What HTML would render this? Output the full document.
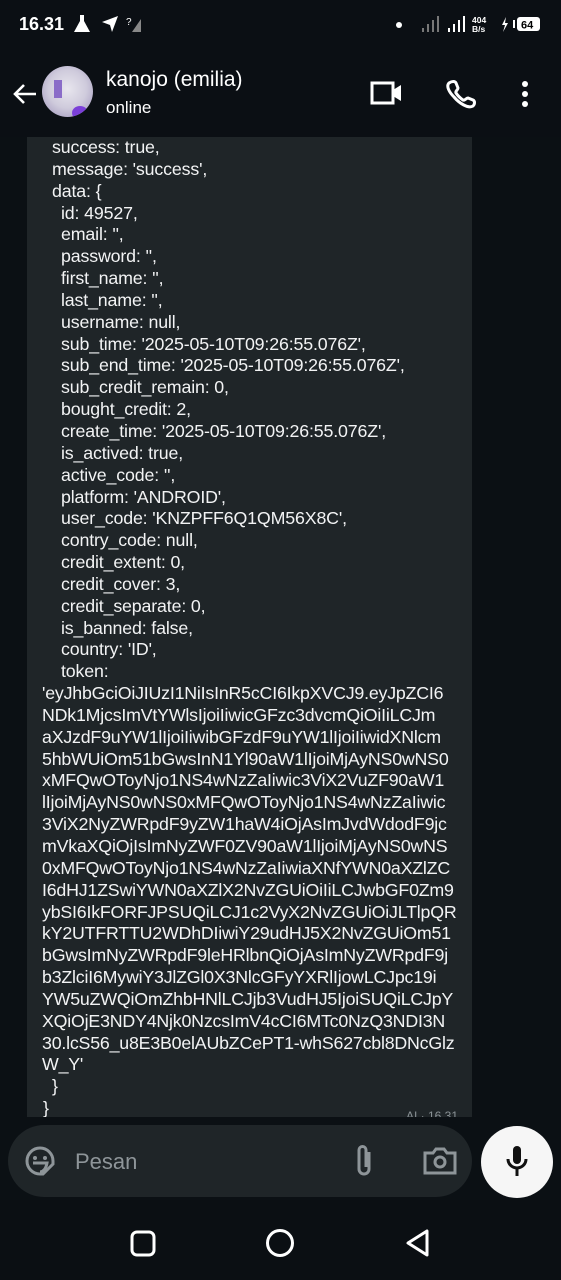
<!DOCTYPE html>
<html><head><meta charset="utf-8"><style>
*{margin:0;padding:0;box-sizing:border-box}
body{width:561px;height:1280px;overflow:hidden;background:#0b1014;font-family:"Liberation Sans",sans-serif;position:relative}
.status{position:absolute;top:0;left:0;width:561px;height:52px;background:#0b0f14;color:#fff}
.header{position:absolute;top:52px;left:0;width:561px;height:85px;background:#0b0f14;color:#fff}
.bubble{position:absolute;left:27px;top:137px;width:445px;height:980px;background:#1f2528;overflow:hidden}
.txt{position:absolute;left:0;top:0;color:#f2f3f4;font-size:17.8px;line-height:21.85px;white-space:pre;letter-spacing:-0.15px}
.tok{letter-spacing:-0.2px}
.input{position:absolute;left:8px;top:1125px;width:464px;height:72px;border-radius:36px;background:#1f2528}
.mic{position:absolute;left:481px;top:1126px;width:72px;height:72px;border-radius:50%;background:#f6f6f6}
.nav{position:absolute;left:0;top:1200px;width:561px;height:80px;background:#0b0f13}
</style></head><body>
<div class="status">
 <div style="position:absolute;left:19px;top:14px;font-size:18px;font-weight:bold">16.31</div>
 <svg style="position:absolute;left:72px;top:13px" width="70" height="22" viewBox="0 0 70 22">
  <path d="M6 2h6M8 2v6l-6 11h16l-6-11V2" fill="#fff"/>
  <path d="M30 9l16-6-6 16-2-7z" fill="#fff"/>
  <text x="54" y="12" fill="#fff" font-size="10" font-family="Liberation Sans">?</text>
  <path d="M60 19h9V6z" fill="#888"/>
 </svg>
 <div style="position:absolute;left:396px;top:22px;width:6px;height:6px;border-radius:50%;background:#fff"></div>
 <svg style="position:absolute;left:420px;top:14px" width="125" height="22" viewBox="0 0 125 22">
  <rect x="2" y="14" width="2" height="4" fill="#777"/><rect x="7" y="10" width="2" height="8" fill="#777"/><rect x="12" y="6" width="2" height="12" fill="#777"/><rect x="17" y="2" width="2" height="16" fill="#777"/>
  <rect x="28" y="14" width="2" height="4" fill="#fff"/><rect x="33" y="10" width="2" height="8" fill="#fff"/><rect x="38" y="6" width="2" height="12" fill="#fff"/><rect x="43" y="2" width="2" height="16" fill="#fff"/>
  <text x="52" y="9" fill="#fff" font-size="8.5" font-family="Liberation Sans" font-weight="bold">404</text>
  <text x="52" y="18" fill="#fff" font-size="8.5" font-family="Liberation Sans" font-weight="bold">B/s</text>
  <path d="M86 3l-4 8h3l-2 7 5-9h-3z" fill="#fff"/>
  <rect x="93" y="6" width="2" height="8" fill="#fff"/>
  <rect x="97" y="3" width="23" height="14" rx="3" fill="#fff"/>
  <text x="101" y="14.5" fill="#000" font-size="11" font-family="Liberation Sans" font-weight="bold">64</text>
 </svg>
</div>
<div class="header">
 <svg style="position:absolute;left:12px;top:30px" width="26" height="24" viewBox="0 0 26 24"><path d="M24 12H3M12 3l-9 9 9 9" stroke="#fff" stroke-width="2.6" fill="none"/></svg>
 <div style="position:absolute;left:42px;top:14px;width:51px;height:51px;border-radius:50%;background:radial-gradient(circle at 50% 45%,#e8e6ee 0,#cfcbdc 50%,#9a8fb8 100%);overflow:hidden">
  <div style="position:absolute;left:12px;top:14px;width:8px;height:18px;background:#8a6cc8"></div>
  <div style="position:absolute;left:30px;top:40px;width:16px;height:14px;background:#7b3fd8;border-radius:50%"></div>
 </div>
 <div style="position:absolute;left:106px;top:16px;font-size:21px">kanojo (emilia)</div>
 <div style="position:absolute;left:106px;top:46px;font-size:17px">online</div>
 <svg style="position:absolute;left:370px;top:29px" width="34" height="24" viewBox="0 0 34 24"><rect x="2" y="2" width="21" height="20" stroke="#fff" stroke-width="3" fill="none"/><path d="M23 9l8-5v16l-8-5z" fill="#fff"/></svg>
 <svg style="position:absolute;left:445px;top:27px" width="32" height="30" viewBox="0 0 32 30"><path d="M4 4c3-2 6-2 7 0l2 5c0 2-3 3-2 5 2 3 4 5 7 7 2 1 3-2 5-2l5 2c2 1 2 4 0 6-5 3-14-3-19-9C4 13 1 7 4 4z" stroke="#fff" stroke-width="3" fill="none"/></svg>
 <svg style="position:absolute;left:520px;top:28px" width="10" height="28" viewBox="0 0 10 28"><circle cx="5" cy="4" r="3" fill="#fff"/><circle cx="5" cy="14" r="3" fill="#fff"/><circle cx="5" cy="24" r="3" fill="#fff"/></svg>
</div>
<div class="bubble">
<div class="txt"><span style="padding-left:25px">success: true,</span>
<span style="padding-left:25px">message: 'success',</span>
<span style="padding-left:25px">data: {</span>
<span style="padding-left:34px">id: 49527,</span>
<span style="padding-left:34px">email: '',</span>
<span style="padding-left:34px">password: '',</span>
<span style="padding-left:34px">first_name: '',</span>
<span style="padding-left:34px">last_name: '',</span>
<span style="padding-left:34px">username: null,</span>
<span style="padding-left:34px">sub_time: '2025-05-10T09:26:55.076Z',</span>
<span style="padding-left:34px">sub_end_time: '2025-05-10T09:26:55.076Z',</span>
<span style="padding-left:34px">sub_credit_remain: 0,</span>
<span style="padding-left:34px">bought_credit: 2,</span>
<span style="padding-left:34px">create_time: '2025-05-10T09:26:55.076Z',</span>
<span style="padding-left:34px">is_actived: true,</span>
<span style="padding-left:34px">active_code: '',</span>
<span style="padding-left:34px">platform: 'ANDROID',</span>
<span style="padding-left:34px">user_code: 'KNZPFF6Q1QM56X8C',</span>
<span style="padding-left:34px">contry_code: null,</span>
<span style="padding-left:34px">credit_extent: 0,</span>
<span style="padding-left:34px">credit_cover: 3,</span>
<span style="padding-left:34px">credit_separate: 0,</span>
<span style="padding-left:34px">is_banned: false,</span>
<span style="padding-left:34px">country: 'ID',</span>
<span style="padding-left:34px">token:</span>
<span class="tok" style="padding-left:15px">'eyJhbGciOiJIUzI1NiIsInR5cCI6IkpXVCJ9.eyJpZCI6</span>
<span class="tok" style="padding-left:15px">NDk1MjcsImVtYWlsIjoiIiwicGFzc3dvcmQiOiIiLCJm</span>
<span class="tok" style="padding-left:15px">aXJzdF9uYW1lIjoiIiwibGFzdF9uYW1lIjoiIiwidXNlcm</span>
<span class="tok" style="padding-left:15px">5hbWUiOm51bGwsInN1Yl90aW1lIjoiMjAyNS0wNS0</span>
<span class="tok" style="padding-left:15px">xMFQwOToyNjo1NS4wNzZaIiwic3ViX2VuZF90aW1</span>
<span class="tok" style="padding-left:15px">lIjoiMjAyNS0wNS0xMFQwOToyNjo1NS4wNzZaIiwic</span>
<span class="tok" style="padding-left:15px">3ViX2NyZWRpdF9yZW1haW4iOjAsImJvdWdodF9jc</span>
<span class="tok" style="padding-left:15px">mVkaXQiOjIsImNyZWF0ZV90aW1lIjoiMjAyNS0wNS</span>
<span class="tok" style="padding-left:15px">0xMFQwOToyNjo1NS4wNzZaIiwiaXNfYWN0aXZlZC</span>
<span class="tok" style="padding-left:15px">I6dHJ1ZSwiYWN0aXZlX2NvZGUiOiIiLCJwbGF0Zm9</span>
<span class="tok" style="padding-left:15px">ybSI6IkFORFJPSUQiLCJ1c2VyX2NvZGUiOiJLTlpQR</span>
<span class="tok" style="padding-left:15px">kY2UTFRTTU2WDhDIiwiY29udHJ5X2NvZGUiOm51</span>
<span class="tok" style="padding-left:15px">bGwsImNyZWRpdF9leHRlbnQiOjAsImNyZWRpdF9j</span>
<span class="tok" style="padding-left:15px">b3ZlciI6MywiY3JlZGl0X3NlcGFyYXRlIjowLCJpc19i</span>
<span class="tok" style="padding-left:15px">YW5uZWQiOmZhbHNlLCJjb3VudHJ5IjoiSUQiLCJpY</span>
<span class="tok" style="padding-left:15px">XQiOjE3NDY4Njk0NzcsImV4cCI6MTc0NzQ3NDI3N</span>
<span class="tok" style="padding-left:15px">30.lcS56_u8E3B0elAUbZCePT1-whS627cbl8DNcGlz</span>
<span class="tok" style="padding-left:15px">W_Y'</span>
<span style="padding-left:25px">}</span>
<span style="padding-left:16px">}</span></div>
<div style="position:absolute;right:14px;top:972px;color:#8a9296;font-size:12px">AI · 16.31</div>
</div>
<div class="input">
 <svg style="position:absolute;left:16px;top:20px" width="32" height="32" viewBox="0 0 32 32"><path d="M16 3a13 13 0 1 0 0 26h3l10-10v-3A13 13 0 0 0 16 3z" stroke="#8e9599" stroke-width="3" fill="none"/><circle cx="11" cy="13" r="2" fill="#8e9599"/><circle cx="21" cy="13" r="2" fill="#8e9599"/><path d="M9 18h14c-1 6-4 9-7 9" stroke="#8e9599" stroke-width="3" fill="none"/></svg>
 <div style="position:absolute;left:67px;top:24px;font-size:22px;color:#8e9599">Pesan</div>
 <svg style="position:absolute;left:344px;top:18px" width="24" height="36" viewBox="0 0 24 36"><path d="M17 9v17a5 5 0 0 1-10 0V7a3.5 3.5 0 0 1 7 0v17" stroke="#8e9599" stroke-width="3" fill="none"/></svg>
 <svg style="position:absolute;left:415px;top:21px" width="34" height="30" viewBox="0 0 34 30"><path d="M2 7h8l3-4h8l3 4h8v20H2z" stroke="#8e9599" stroke-width="3" fill="none"/><circle cx="17" cy="16" r="5" stroke="#8e9599" stroke-width="3" fill="none"/></svg>
</div>
<div class="mic"><svg style="position:absolute;left:24px;top:19px" width="24" height="34" viewBox="0 0 24 34"><rect x="8" y="1" width="8" height="18" rx="4" fill="#111"/><path d="M3 14a9 9 0 0 0 18 0M12 23v8" stroke="#111" stroke-width="3" fill="none"/></svg></div>
<div class="nav">
 <svg style="position:absolute;left:130px;top:30px" width="28" height="28"><rect x="2" y="2" width="22" height="23" rx="5" stroke="#fff" stroke-width="3" fill="none"/></svg>
 <svg style="position:absolute;left:265px;top:28px" width="30" height="30"><circle cx="15" cy="15" r="12.5" stroke="#fff" stroke-width="3" fill="none"/></svg>
 <svg style="position:absolute;left:404px;top:28px" width="28" height="30"><path d="M23 3v24L4 15z" stroke="#fff" stroke-width="3" stroke-linejoin="round" fill="none"/></svg>
</div>
</body></html>
